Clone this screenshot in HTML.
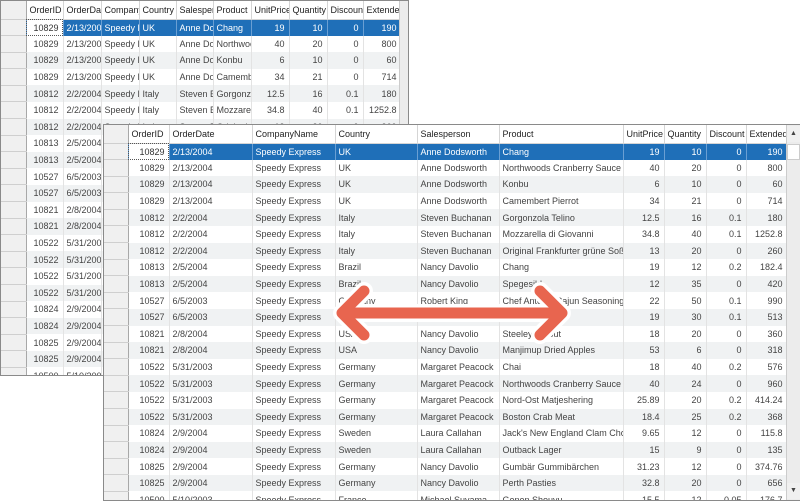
<!DOCTYPE html>
<html><head><meta charset="utf-8">
<style>
*{margin:0;padding:0;box-sizing:border-box}
body{width:800px;height:500px;background:#fff;position:relative;overflow:hidden;font-family:"Liberation Sans",sans-serif;font-size:9px;color:#444}
.g{position:absolute;background:#fff;border:1px solid #8a8a8a;overflow:hidden}
table{border-collapse:collapse;table-layout:fixed;position:absolute;left:0;top:0}
td,th{height:16.6px;white-space:nowrap;overflow:hidden;text-overflow:clip;padding:0 3px;border-right:1px solid #e3e3e3;font-weight:normal;text-align:left}
th{height:18px;background:#fff;color:#222;border-right:1px solid #d5d5d5;border-bottom:1px solid #d5d5d5}
td.r{text-align:right;padding-right:4px}
td.h,th.h{background:#f0f0f0;border-right:1px solid #a8a8a8;border-bottom:1px solid #cfcfcf}
tr:nth-child(even) td{background:#f0f2f3}
tr:nth-child(even) td.h{background:#f0f0f0}
tr.s td{background:#1f6fb8!important;color:#fff;border-right:1px solid #6a9fd3}
tr.s td.h{background:#f0f0f0!important}
tr.s td.f{background:#fff!important;color:#333;outline:1px dotted #555;outline-offset:-1px}
.sb{position:absolute;top:0;right:0;bottom:0;background:#ececec;border-left:1px solid #ccc}
</style></head><body>

<div class="g" style="left:0;top:0;width:409px;height:376px">
<table style="width:400px">
<colgroup><col style="width:25px"><col style="width:37px"><col style="width:38px"><col style="width:38px"><col style="width:37px"><col style="width:37px"><col style="width:38px"><col style="width:38px"><col style="width:38px"><col style="width:36px"><col style="width:38px"></colgroup>
<tr><th class="h"></th><th>OrderID</th><th>OrderDate</th><th>CompanyName</th><th>Country</th><th>Salesperson</th><th>Product</th><th>UnitPrice</th><th>Quantity</th><th>Discount</th><th>Extended</th></tr>
<tr class="s"><td class="h"></td><td class="r f">10829</td><td>2/13/2004</td><td>Speedy Express</td><td>UK</td><td>Anne Dodsworth</td><td>Chang</td><td class="r">19</td><td class="r">10</td><td class="r">0</td><td class="r">190</td></tr>
<tr><td class="h"></td><td class="r">10829</td><td>2/13/2004</td><td>Speedy Express</td><td>UK</td><td>Anne Dodsworth</td><td>Northwoods</td><td class="r">40</td><td class="r">20</td><td class="r">0</td><td class="r">800</td></tr>
<tr><td class="h"></td><td class="r">10829</td><td>2/13/2004</td><td>Speedy Express</td><td>UK</td><td>Anne Dodsworth</td><td>Konbu</td><td class="r">6</td><td class="r">10</td><td class="r">0</td><td class="r">60</td></tr>
<tr><td class="h"></td><td class="r">10829</td><td>2/13/2004</td><td>Speedy Express</td><td>UK</td><td>Anne Dodsworth</td><td>Camembert</td><td class="r">34</td><td class="r">21</td><td class="r">0</td><td class="r">714</td></tr>
<tr><td class="h"></td><td class="r">10812</td><td>2/2/2004</td><td>Speedy Express</td><td>Italy</td><td>Steven Buchanan</td><td>Gorgonzola</td><td class="r">12.5</td><td class="r">16</td><td class="r">0.1</td><td class="r">180</td></tr>
<tr><td class="h"></td><td class="r">10812</td><td>2/2/2004</td><td>Speedy Express</td><td>Italy</td><td>Steven Buchanan</td><td>Mozzarella</td><td class="r">34.8</td><td class="r">40</td><td class="r">0.1</td><td class="r">1252.8</td></tr>
<tr><td class="h"></td><td class="r">10812</td><td>2/2/2004</td><td>Speedy Express</td><td>Italy</td><td>Steven B</td><td>Original</td><td class="r">13</td><td class="r">20</td><td class="r">0</td><td class="r">260</td></tr>
<tr><td class="h"></td><td class="r">10813</td><td>2/5/2004</td><td></td><td></td><td></td><td></td><td></td><td></td><td></td><td></td></tr>
<tr><td class="h"></td><td class="r">10813</td><td>2/5/2004</td><td></td><td></td><td></td><td></td><td></td><td></td><td></td><td></td></tr>
<tr><td class="h"></td><td class="r">10527</td><td>6/5/2003</td><td></td><td></td><td></td><td></td><td></td><td></td><td></td><td></td></tr>
<tr><td class="h"></td><td class="r">10527</td><td>6/5/2003</td><td></td><td></td><td></td><td></td><td></td><td></td><td></td><td></td></tr>
<tr><td class="h"></td><td class="r">10821</td><td>2/8/2004</td><td></td><td></td><td></td><td></td><td></td><td></td><td></td><td></td></tr>
<tr><td class="h"></td><td class="r">10821</td><td>2/8/2004</td><td></td><td></td><td></td><td></td><td></td><td></td><td></td><td></td></tr>
<tr><td class="h"></td><td class="r">10522</td><td>5/31/2003</td><td></td><td></td><td></td><td></td><td></td><td></td><td></td><td></td></tr>
<tr><td class="h"></td><td class="r">10522</td><td>5/31/2003</td><td></td><td></td><td></td><td></td><td></td><td></td><td></td><td></td></tr>
<tr><td class="h"></td><td class="r">10522</td><td>5/31/2003</td><td></td><td></td><td></td><td></td><td></td><td></td><td></td><td></td></tr>
<tr><td class="h"></td><td class="r">10522</td><td>5/31/2003</td><td></td><td></td><td></td><td></td><td></td><td></td><td></td><td></td></tr>
<tr><td class="h"></td><td class="r">10824</td><td>2/9/2004</td><td></td><td></td><td></td><td></td><td></td><td></td><td></td><td></td></tr>
<tr><td class="h"></td><td class="r">10824</td><td>2/9/2004</td><td></td><td></td><td></td><td></td><td></td><td></td><td></td><td></td></tr>
<tr><td class="h"></td><td class="r">10825</td><td>2/9/2004</td><td></td><td></td><td></td><td></td><td></td><td></td><td></td><td></td></tr>
<tr><td class="h"></td><td class="r">10825</td><td>2/9/2004</td><td></td><td></td><td></td><td></td><td></td><td></td><td></td><td></td></tr>
<tr><td class="h"></td><td class="r">10500</td><td>5/10/2003</td><td></td><td></td><td></td><td></td><td></td><td></td><td></td><td></td></tr>
</table>
<div class="sb" style="width:9px"></div>
</div>

<div class="g" style="left:103px;top:124px;width:698px;height:377px">
<table style="width:683px">
<colgroup><col style="width:24px"><col style="width:41px"><col style="width:83px"><col style="width:83px"><col style="width:82px"><col style="width:82px"><col style="width:124px"><col style="width:41px"><col style="width:42px"><col style="width:40px"><col style="width:41px"></colgroup>
<tr><th class="h"></th><th>OrderID</th><th>OrderDate</th><th>CompanyName</th><th>Country</th><th>Salesperson</th><th>Product</th><th>UnitPrice</th><th>Quantity</th><th>Discount</th><th>Extended</th></tr>
<tr class="s"><td class="h"></td><td class="r f">10829</td><td>2/13/2004</td><td>Speedy Express</td><td>UK</td><td>Anne Dodsworth</td><td>Chang</td><td class="r">19</td><td class="r">10</td><td class="r">0</td><td class="r">190</td></tr>
<tr><td class="h"></td><td class="r">10829</td><td>2/13/2004</td><td>Speedy Express</td><td>UK</td><td>Anne Dodsworth</td><td>Northwoods Cranberry Sauce</td><td class="r">40</td><td class="r">20</td><td class="r">0</td><td class="r">800</td></tr>
<tr><td class="h"></td><td class="r">10829</td><td>2/13/2004</td><td>Speedy Express</td><td>UK</td><td>Anne Dodsworth</td><td>Konbu</td><td class="r">6</td><td class="r">10</td><td class="r">0</td><td class="r">60</td></tr>
<tr><td class="h"></td><td class="r">10829</td><td>2/13/2004</td><td>Speedy Express</td><td>UK</td><td>Anne Dodsworth</td><td>Camembert Pierrot</td><td class="r">34</td><td class="r">21</td><td class="r">0</td><td class="r">714</td></tr>
<tr><td class="h"></td><td class="r">10812</td><td>2/2/2004</td><td>Speedy Express</td><td>Italy</td><td>Steven Buchanan</td><td>Gorgonzola Telino</td><td class="r">12.5</td><td class="r">16</td><td class="r">0.1</td><td class="r">180</td></tr>
<tr><td class="h"></td><td class="r">10812</td><td>2/2/2004</td><td>Speedy Express</td><td>Italy</td><td>Steven Buchanan</td><td>Mozzarella di Giovanni</td><td class="r">34.8</td><td class="r">40</td><td class="r">0.1</td><td class="r">1252.8</td></tr>
<tr><td class="h"></td><td class="r">10812</td><td>2/2/2004</td><td>Speedy Express</td><td>Italy</td><td>Steven Buchanan</td><td>Original Frankfurter grüne Soße</td><td class="r">13</td><td class="r">20</td><td class="r">0</td><td class="r">260</td></tr>
<tr><td class="h"></td><td class="r">10813</td><td>2/5/2004</td><td>Speedy Express</td><td>Brazil</td><td>Nancy Davolio</td><td>Chang</td><td class="r">19</td><td class="r">12</td><td class="r">0.2</td><td class="r">182.4</td></tr>
<tr><td class="h"></td><td class="r">10813</td><td>2/5/2004</td><td>Speedy Express</td><td>Brazil</td><td>Nancy Davolio</td><td>Spegesild</td><td class="r">12</td><td class="r">35</td><td class="r">0</td><td class="r">420</td></tr>
<tr><td class="h"></td><td class="r">10527</td><td>6/5/2003</td><td>Speedy Express</td><td>Germany</td><td>Robert King</td><td>Chef Anton's Cajun Seasoning</td><td class="r">22</td><td class="r">50</td><td class="r">0.1</td><td class="r">990</td></tr>
<tr><td class="h"></td><td class="r">10527</td><td>6/5/2003</td><td>Speedy Express</td><td>Germany</td><td></td><td></td><td class="r">19</td><td class="r">30</td><td class="r">0.1</td><td class="r">513</td></tr>
<tr><td class="h"></td><td class="r">10821</td><td>2/8/2004</td><td>Speedy Express</td><td>USA</td><td>Nancy Davolio</td><td>Steeleye Stout</td><td class="r">18</td><td class="r">20</td><td class="r">0</td><td class="r">360</td></tr>
<tr><td class="h"></td><td class="r">10821</td><td>2/8/2004</td><td>Speedy Express</td><td>USA</td><td>Nancy Davolio</td><td>Manjimup Dried Apples</td><td class="r">53</td><td class="r">6</td><td class="r">0</td><td class="r">318</td></tr>
<tr><td class="h"></td><td class="r">10522</td><td>5/31/2003</td><td>Speedy Express</td><td>Germany</td><td>Margaret Peacock</td><td>Chai</td><td class="r">18</td><td class="r">40</td><td class="r">0.2</td><td class="r">576</td></tr>
<tr><td class="h"></td><td class="r">10522</td><td>5/31/2003</td><td>Speedy Express</td><td>Germany</td><td>Margaret Peacock</td><td>Northwoods Cranberry Sauce</td><td class="r">40</td><td class="r">24</td><td class="r">0</td><td class="r">960</td></tr>
<tr><td class="h"></td><td class="r">10522</td><td>5/31/2003</td><td>Speedy Express</td><td>Germany</td><td>Margaret Peacock</td><td>Nord-Ost Matjeshering</td><td class="r">25.89</td><td class="r">20</td><td class="r">0.2</td><td class="r">414.24</td></tr>
<tr><td class="h"></td><td class="r">10522</td><td>5/31/2003</td><td>Speedy Express</td><td>Germany</td><td>Margaret Peacock</td><td>Boston Crab Meat</td><td class="r">18.4</td><td class="r">25</td><td class="r">0.2</td><td class="r">368</td></tr>
<tr><td class="h"></td><td class="r">10824</td><td>2/9/2004</td><td>Speedy Express</td><td>Sweden</td><td>Laura Callahan</td><td>Jack's New England Clam Chowder</td><td class="r">9.65</td><td class="r">12</td><td class="r">0</td><td class="r">115.8</td></tr>
<tr><td class="h"></td><td class="r">10824</td><td>2/9/2004</td><td>Speedy Express</td><td>Sweden</td><td>Laura Callahan</td><td>Outback Lager</td><td class="r">15</td><td class="r">9</td><td class="r">0</td><td class="r">135</td></tr>
<tr><td class="h"></td><td class="r">10825</td><td>2/9/2004</td><td>Speedy Express</td><td>Germany</td><td>Nancy Davolio</td><td>Gumbär Gummibärchen</td><td class="r">31.23</td><td class="r">12</td><td class="r">0</td><td class="r">374.76</td></tr>
<tr><td class="h"></td><td class="r">10825</td><td>2/9/2004</td><td>Speedy Express</td><td>Germany</td><td>Nancy Davolio</td><td>Perth Pasties</td><td class="r">32.8</td><td class="r">20</td><td class="r">0</td><td class="r">656</td></tr>
<tr><td class="h"></td><td class="r">10500</td><td>5/10/2003</td><td>Speedy Express</td><td>France</td><td>Michael Suyama</td><td>Genen Shouyu</td><td class="r">15.5</td><td class="r">12</td><td class="r">0.05</td><td class="r">176.7</td></tr>
</table>
<div class="sb" style="width:14px">
<div style="position:absolute;top:1px;left:0;width:13px;height:16px;background:#f0f0f0;font-size:7px;text-align:center;line-height:16px;color:#444">▲</div>
<div style="position:absolute;top:19px;left:0;width:13px;height:16px;background:#fff;border:1px solid #ccc"></div>
<div style="position:absolute;bottom:1px;left:0;width:13px;height:16px;background:#f0f0f0;font-size:7px;text-align:center;line-height:16px;color:#444">▼</div>
</div>
</div>

<svg style="position:absolute;left:0;top:0" width="800" height="500">
<g fill="none" stroke-linecap="round" stroke-linejoin="round">
<path d="M342 313 H562 M364 291 L342 313 L364 335 M540 291 L562 313 L540 335" stroke="#fff" stroke-width="18"/>
<path d="M342 313 H562 M364 291 L342 313 L364 335 M540 291 L562 313 L540 335" stroke="#e8654f" stroke-width="11"/>
</g>
</svg>
</body></html>
